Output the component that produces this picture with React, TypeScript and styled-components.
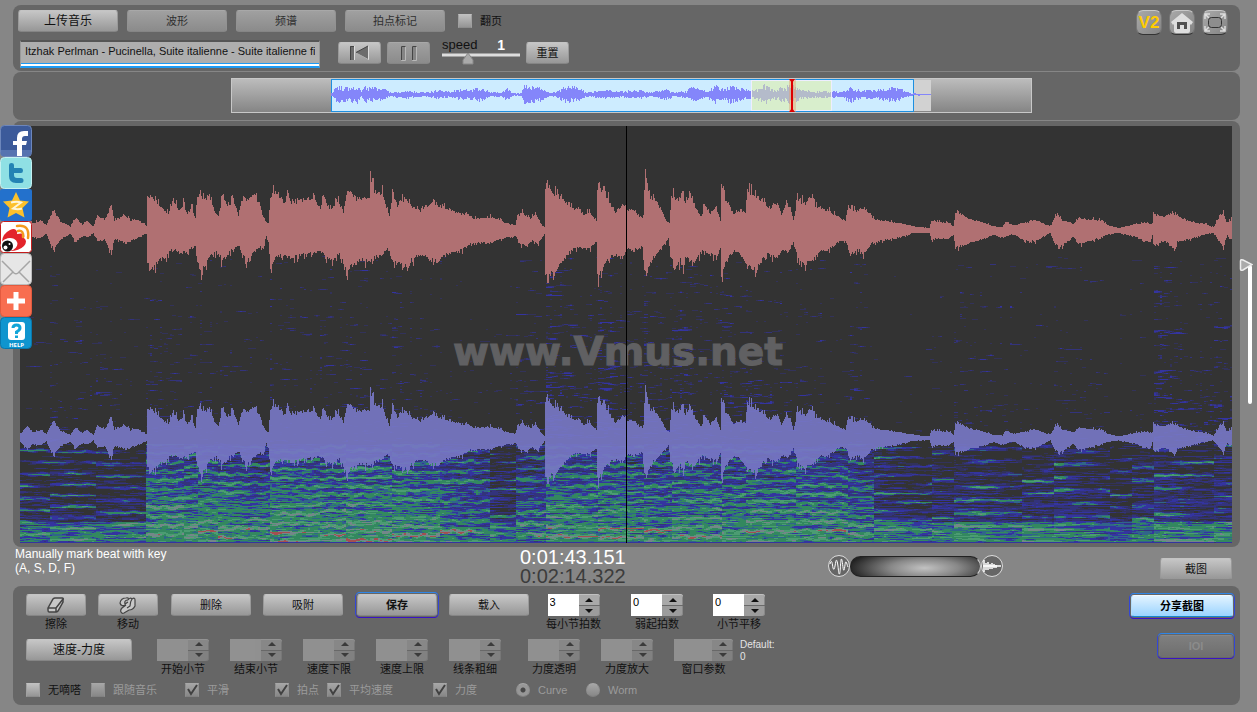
import React from "react";
import styled, { createGlobalStyle, css } from "styled-components";

const GlobalStyle = createGlobalStyle`
  * { box-sizing: border-box; }
  body {
    margin: 0;
    background: #868686;
    font-family: "Liberation Sans", "Noto Sans CJK SC", sans-serif;
    font-size: 11px;
    line-height: 14px;
    color: #111;
  }
  button, input { font-family: inherit; }
`;

/* ---------- waveform and spectrogram data ---------- */

type Pt = [number, number];

const W = 1212;
const H = 417;

const hash = (a: number, b: number) => {
  let n = (Math.imul(a, 374761393) + Math.imul(b, 668265263)) | 0;
  n = Math.imul(n ^ (n >>> 13), 1274126177);
  return ((n ^ (n >>> 16)) >>> 0) / 4294967296;
};

const smooth = (x: number, row: number, size: number) => {
  const i = Math.floor(x / size);
  const t = x / size - i;
  return hash(i, row) * (1 - t) + hash(i + 1, row) * t;
};

/* list of "x amplitude" pairs */
const parse = (s: string): Pt[] =>
  s.trim().split(/\s+/).map((p) => p.split(":").map(Number) as Pt);

const UP = parse(`0:6 7:14 12:7 20:10 26:5 33:22 40:9 50:4 55:13 62:6 67:10 73:4 77:15 85:11 91:27 94:10 100:13
105:16 110:9 116:12 124:6 126:5 127:34 129:36 136:31 143:21 148:18 153:33 158:21 163:27 167:18 172:23 175:12
177:33 180:40 184:31 189:38 193:23 198:14 202:35 207:27 213:31 218:16 223:38 227:29 231:38 235:38 239:28 243:14
246:7 248:8 250:33 253:39 258:39 263:29 267:36 273:27 283:33 295:33 300:22 302:36 310:22 317:32 323:20 326:38
330:40 337:33 343:33 349:35 350:52 352:52 354:40 362:40 367:22 369:15 372:36 377:26 380:33 385:33 392:26 400:20
410:29 420:25 430:22 440:18 448:16 455:12 463:13 472:14 480:10 487:7 495:5 497:15 502:18 510:12 515:18 520:7
524:3 525:45 527:56 528:46 533:40 535:38 540:35 547:27 552:22 558:23 563:15 568:20 576:10 577:45 578:50 580:42
584:44 586:37 590:28 595:18 602:27 608:22 613:23 618:15 623:13 624:43 625:57 627:50 630:35 637:29 642:20 645:10
649:8 651:38 657:32 663:40 665:27 670:37 675:25 681:13 684:28 690:18 696:25 700:10 701:50 703:38 708:27 713:17
720:22 725:18 727:44 733:37 742:32 748:24 758:27 761:15 765:28 770:25 773:10 777:32 785:29 792:37 795:24
800:25 810:19 817:15 825:10 828:25 835:20 843:24 848:20 853:12 867:9 880:7 890:5 900:3 909:2 911:9 928:8
933:4 935:18 940:17 948:12 960:9 973:4 982:3 985:9 993:5 1002:7 1007:8 1015:11 1022:7 1030:4 1034:13 1037:17
1042:10 1053:7 1058:13 1070:11 1080:10 1088:5 1098:2 1113:6 1127:8 1132:6 1133:17 1142:15 1153:17 1165:11
1175:8 1187:6 1193:3 1198:12 1203:18 1206:8 1209:10 1212:12`);

const DOWN = parse(`0:5 7:14 12:8 20:9 26:4 33:21 40:10 50:4 55:13 62:6 67:8 73:3 77:12 85:10 91:26 94:9 105:14
116:9 126:4 127:30 129:44 133:41 140:31 147:27 151:20 155:22 160:25 167:22 175:18 177:35 181:44 188:30 197:22
202:34 208:25 218:15 226:34 233:25 238:19 243:18 246:6 248:13 250:40 257:27 267:28 273:29 287:25 300:22 310:33
320:25 326:44 330:38 340:33 350:33 363:25 367:19 373:35 385:38 400:25 410:33 420:29 430:24 440:22 450:15 460:13
470:14 480:10 495:6 500:15 507:17 512:11 517:16 524:4 525:45 527:57 530:46 535:43 542:34 547:27 553:20 562:18
569:20 576:13 577:48 578:58 580:47 587:33 595:25 602:30 608:20 613:22 622:17 624:46 626:49 628:37 633:30
640:20 648:9 651:30 654:42 660:32 663:45 665:30 675:35 682:20 687:26 697:27 700:18 701:50 704:38 713:22
720:25 727:36 736:43 747:24 755:31 762:20 767:25 773:13 777:30 784:37 792:34 797:23 808:22 817:13 825:11
830:27 838:20 843:26 850:15 863:11 880:8 893:3 909:3 911:10 928:9 933:5 935:19 942:17 950:13 963:10 973:5
983:8 993:4 1003:11 1015:12 1030:3 1034:15 1042:17 1053:7 1058:15 1070:12 1087:5 1098:3 1117:8 1130:13
1132:5 1133:15 1145:12 1154:19 1157:13 1168:10 1183:5 1193:3 1203:18 1207:5 1209:10 1212:8`);

const OVER = parse(`331:1 333:3 336:8 345:7 350:7 358:9 361:2 364:8 375:7 385:5 390:2 400:3 405:4 420:2 432:3 437:4 450:3
460:5 470:5 480:7 490:2 500:2 507:6 513:1 521:1 524:9 530:9 540:7 547:3 550:1 557:3 563:8 572:8 580:6 585:2 604:4
620:3 640:4 650:2 665:5 675:2 686:3 690:7 700:6 705:3 716:9 724:5 730:9 740:6 750:4 760:6 764:10 772:5 784:7
790:10 800:5 815:3 835:3 840:2 850:8 860:4 880:5 895:8 905:3 910:1 930:0`);

const at = (pts: Pt[], x: number) => {
  if (x <= pts[0][0]) return pts[0][1];
  for (let i = 1; i < pts.length; i++) {
    if (x <= pts[i][0]) {
      const [x0, y0] = pts[i - 1];
      const [x1, y1] = pts[i];
      return y0 + ((y1 - y0) * (x - x0)) / (x1 - x0 || 1);
    }
  }
  return pts[pts.length - 1][1];
};

/* uneven column heights: mostly a little under the envelope, with single taller spikes */
const rough = (x: number, seed: number) => {
  const r = hash(x * 7 + 13, seed * 101);
  return r > 0.86 ? 1.04 + (r - 0.86) : 0.86 + r * 0.18;
};

const wave = (mid: number, gain: number) => {
  let d = "";
  for (let x = 0; x < W; x++) {
    const up = at(UP, x) * gain * rough(x, 3);
    const dn = at(DOWN, x) * gain * rough(x, 7);
    d += `M${x} ${Math.round(mid - up)}V${Math.round(mid + dn)}`;
  }
  return d;
};

const overview = () => {
  let d = "";
  for (let x = 331; x < 931; x++) {
    const a = at(OVER, x) * (0.4 + 0.65 * hash(x * 7, 1100));
    const b = at(OVER, x) * (0.4 + 0.65 * hash(x * 7, 1200));
    d += `M${x - 231} ${Math.round(15 - a)}V${Math.round(16 + b)}`;
  }
  return d;
};

/* note onsets: start, loudness, spacing of the partials, decay per pixel, high-band energy */
const NOTES = [
  [0, 0.3, 12, 0, 0.1], [29, 0.36, 11, 0.001, 0.3], [76, 0.36, 12, 0.001, 0.2],
  [126, 0.84, 9, 0.001, 0.35], [163, 0.8, 10, 0.001, 0.2], [177, 0.86, 10, 0.002, 0.3],
  [198, 0.82, 9, 0.003, 0.25], [249, 0.85, 9, 0.0005, 0.35], [300, 0.83, 8, 0, 0.3],
  [325, 0.86, 9, 0, 0.35], [372, 0.84, 9, 0.001, 0.35], [420, 0.72, 10, 0.003, 0.2], [470, 0.46, 9, 0.004, 0.05],
  [495, 0.62, 11, 0.001, 0.3], [525, 0.85, 10, 0.002, 0.6], [577, 0.84, 9, 0.002, 0.6],
  [624, 0.76, 11, 0.002, 0.5], [651, 0.8, 9, 0.001, 0.5], [701, 0.78, 9, 0.001, 0.45],
  [726, 0.8, 10, 0.001, 0.45], [775, 0.76, 9, 0.001, 0.28], [828, 0.7, 9, 0.003, 0.3],
  [853, 0.5, 9, 0.004, 0.02], [911, 0.42, 13, 0.001, 0.1], [934, 0.5, 13, 0.003, 0.35],
  [1002, 0.42, 12, 0.001, 0.15], [1034, 0.5, 13, 0.003, 0.3], [1090, 0.26, 12, 0, 0],
  [1112, 0.42, 13, 0, 0.15], [1133, 0.56, 13, 0.003, 0.6], [1193, 0.48, 13, 0, 0.4],
];

const TINTS = ["#32325a", "#33337c", "#3434a0", "#30658a", "#33885f", "#4b9c72", "#748789", "#a34f51"];

const spectrogram = () => {
  const out = TINTS.map(() => "");
  for (let y = 130; y < H; y++) {
    const f = (y - 318) / 99;
    let start = 0;
    let prev = -1;
    let n = 0;
    for (let x = 0; x <= W; x += 2) {
      while (n + 1 < NOTES.length && NOTES[n + 1][0] <= x) n++;
      const [x0, g0, sp, decay, high] = NOTES[n];
      const g = g0 - (x - x0) * decay;
      const loud = g0 > 0.6;
      const vib = Math.sin(x / 2.6 + n) * (loud ? 1 : 0.4);
      const phase = (y + vib + n * 5) / sp;
      const harm = Math.max(0, Math.cos(phase * 6.283));
      /* each partial swells and fades on its own */
      const swell = smooth(x, Math.round(phase) * 53 + n * 7, 26);
      let lvl = -1;
      if (x < W) {
        if (f < 0) {
          const k = (y - 130) / 188;
          const grain = smooth(x, y * 31, 5) * 0.6 + smooth(x, (y >> 1) * 17, 19) * 0.4;
          const near = Math.max(0, 1 - (x - x0) / 34);
          const e = grain + harm * 0.12 + high * (0.1 + near * 0.22) + high * k * 0.34 - 0.02;
          if (e > 0.95) lvl = e > 1.08 ? 2 : e > 1.01 ? 1 : 0;
        } else if (loud) {
          const grain = smooth(x, y * 31, 6) * 0.6 + smooth(x, y * 17, 34) * 0.4;
          let e = g * 0.55 + f * 0.4 + harm * (0.14 + swell * 0.3 - f * 0.1) + (grain - 0.5) * 0.56 - 0.29;
          if (f > 0.8 && f < 0.95) e += harm * 0.12;
          if (f > 0.985) e = Math.min(e, 0.33);
          lvl = e < 0.06 ? -1 : e < 0.13 ? 0 : e < 0.27 ? 1 : e < 0.37 ? 2 : e < 0.45 ? 3 : e < 0.62 ? 4 : e < 0.74 ? 5 : e < 0.88 ? 6 : 7;
        } else {
          const grain = smooth(x, y * 31, 8) * 0.55 + smooth(x, y * 17, 40) * 0.45;
          let e = g * 0.5 + f * 0.2 + harm * harm * swell * 0.5 + (grain - 0.5) * 0.5 - 0.22;
          if (f > 0.78) e += 0.24 - harm * 0.1;
          if (f > 0.985) e = Math.min(e, 0.33);
          lvl = e < 0.07 ? -1 : e < 0.14 ? 0 : e < 0.24 ? 1 : e < 0.34 ? 2 : e < 0.41 ? 3 : e < 0.54 ? 4 : e < 0.66 ? 5 : 6;
        }
        if (lvl === 6 && f < 0.6) lvl = 5;
        if (lvl === 7 && f < 0.84) lvl = 5;
      }
      if (lvl !== prev || x === W) {
        if (prev >= 0) out[prev] += `M${start} ${y}.5H${x}`;
        start = x;
        prev = lvl;
      }
    }
  }
  return out;
};

const RED_WAVE = wave(104, 1);
const BLUE_WAVE = wave(312, 0.87);
const OVERVIEW = overview();
const SPECTRUM = spectrogram();

/* ---------- shared parts ---------- */

const Page = styled.div`
  position: relative;
  min-height: 100vh;
  padding: 5px 17px 7px 13px;
  display: flex;
  flex-direction: column;
  gap: 1px;
`;

const Panel = styled.section`
  background: #666;
  border-radius: 8px;
`;

const Button = styled.button<{ $w: number; $tone?: "dim" | "sky" | "off"; $ring?: boolean; $size?: number }>`
  width: ${(p) => p.$w}px;
  height: 22px;
  padding: 0;
  display: flex;
  align-items: center;
  justify-content: center;
  border: 1px solid #999;
  border-color: #c4c4c4 #999 #858585;
  border-radius: 3px;
  background: linear-gradient(#c6c6c6, #979797);
  color: #111;
  font-size: ${(p) => p.$size ?? 11}px;
  line-height: 16px;
  white-space: nowrap;
  svg { flex: none; }
  ${(p) => p.$tone === "dim" && css`
    background: linear-gradient(#a0a0a0, #8b8b8b);
    border-color: #a8a8a8 #929292 #858585;
    color: #303030;
  `}
  ${(p) => p.$tone === "sky" && css`
    background: linear-gradient(#e2f3ff, #9bd4ff);
    border-color: #f2faff #b3ddfb #1687d0;
    color: #000;
  `}
  ${(p) => p.$tone === "off" && css`
    background: linear-gradient(#7f7f7f, #6f6f6f);
    border-color: #888 #777 #707070;
    color: #8b8b8b;
  `}
  ${(p) => p.$ring && css`
    font-weight: 700;
    box-shadow: 0 0 0 1px #666, 0 -1px 0 1px #2f86e6, 0 1px 0 1px #3a14c4, 0 0 0 2px #3346d8;
  `}
`;

const Row = styled.div<{ $gap: number; $left?: number }>`
  display: flex;
  align-items: flex-start;
  gap: ${(p) => p.$gap}px;
  margin-left: ${(p) => p.$left ?? 0}px;
`;

const Stack = styled.div`
  display: flex;
  flex-direction: column;
  align-items: center;
  gap: 1px;
  white-space: nowrap;
`;

const Box = styled.input`
  appearance: none;
  width: 14px;
  height: 14px;
  margin: 0;
  border: 1px solid #999;
  border-color: #c0c0c0 #a0a0a0 #8c8c8c;
  background: linear-gradient(#bfbfbf, #959595);
  &[type="radio"] { border-radius: 50%; }
  &:disabled { opacity: 0.72; }
  &[type="checkbox"]:checked {
    background: url("data:image/svg+xml,%3Csvg xmlns='http://www.w3.org/2000/svg' viewBox='0 0 12 12'%3E%3Cpath d='M2 5l3 5 6-9' fill='none' stroke='%23333' stroke-width='2'/%3E%3C/svg%3E"), linear-gradient(#bfbfbf, #959595);
  }
  &[type="radio"]:checked { background: radial-gradient(#3c3c3c 0 2px, #aaa 3px); }
`;

const CheckLabel = styled.label<{ $w?: number; $faint?: boolean }>`
  display: flex;
  align-items: center;
  gap: 8px;
  width: ${(p) => (p.$w ? `${p.$w}px` : "auto")};
  color: ${(p) => (p.$faint ? "#9b9b9b" : "#111")};
  white-space: nowrap;
`;

/* ---------- top toolbar ---------- */

const Toolbar = styled(Panel)`
  display: flex;
  justify-content: space-between;
  height: 66px;
  padding: 5px 12px 0 5px;
`;

const ToolRows = styled.div`
  display: flex;
  flex-direction: column;
  gap: 8px;
`;

const Tabs = styled.div`
  display: flex;
  align-items: center;
  gap: 9px;
  label { margin-left: 4px; }
`;

const Transport = styled.div`
  display: flex;
  align-items: flex-start;
  gap: 6px;
  margin-left: 12px;
  padding-top: 2px;
`;

const Title = styled.input`
  width: 300px;
  height: 28px;
  padding: 0 4px 6px;
  border: 1px solid #999;
  border-top: 2px solid #555;
  border-bottom: 2px solid #1e9bf5;
  background: #aeaeae;
  box-shadow: inset 0 -2px 0 #fff, inset 0 -3px 0 #1e9bf5;
  font-size: 11px;
  line-height: 14px;
  color: #111;
`;

const Speed = styled.label`
  position: relative;
  width: 78px;
  height: 26px;
  margin: -4px 0 0 6px;
  font-size: 13px;
  svg { display: block; }
`;

const SpeedText = styled.span`
  display: flex;
  justify-content: space-between;
  padding-right: 15px;
  b { color: #fff; font-size: 14px; }
`;

const GhostRange = styled.input`
  position: absolute;
  inset: 0;
  width: 100%;
  height: 100%;
  margin: 0;
  opacity: 0;
`;

const IconBar = styled.div`
  display: flex;
  gap: 7px;
`;

const IconButton = styled.button`
  width: 26px;
  height: 25px;
  padding: 0;
  display: grid;
  place-items: center;
  border: 1px solid #8e8e8e;
  border-color: #c8c8c8 #777 #333;
  border-radius: 7px;
  background: linear-gradient(135deg, #a9a9a9, #848484);
  color: #fc0;
  font: 700 17px/20px "Liberation Sans", sans-serif;
`;

/* ---------- overview strip ---------- */

const OverviewPanel = styled(Panel)`
  padding: 6px 208px 7px 218px;
`;

const Strip = styled.div`
  height: 35px;
  border: 1px solid #c8c8c8;
  background: linear-gradient(#bcbcbc, #858585);
  svg { display: block; width: 100%; height: 33px; }
`;

/* ---------- stage ---------- */

const StagePanel = styled(Panel)`
  padding: 5px 8px 4px 7px;
`;

const Stage = styled.div`
  display: grid;
  background: #333;
  > * { grid-area: 1 / 1; }
  > svg { display: block; width: 100%; height: 417px; }
`;

const Watermark = styled.span`
  place-self: center;
  padding: 34px 16px 0 0;
  font: 700 39px/44px "DejaVu Sans", sans-serif;
  color: #606062;
  -webkit-text-stroke: 1px #606062;
`;

const Cursor = styled.i`
  justify-self: center;
  width: 1px;
  background: #000;
`;

const Share = styled.nav`
  position: absolute;
  left: 0;
  top: 125px;
  display: flex;
  flex-direction: column;
  a, svg { display: block; width: 32px; height: 32px; }
`;

const Zoomer = styled.label`
  position: absolute;
  right: 4px;
  top: 258px;
  width: 14px;
  height: 148px;
  svg { display: block; }
`;

/* ---------- status strip ---------- */

const Status = styled.div`
  display: grid;
  grid-template-columns: 505px 308px 1fr auto;
  height: 37px;
  padding: 0 8px 0 2px;
  color: #fff;
`;

const Hint = styled.p`
  margin: -1px 0 0;
  font-size: 12px;
  line-height: 14px;
`;

const Clock = styled.div`
  font-size: 20px;
  line-height: 19px;
  span { display: block; color: #3c3c3c; }
`;

const Volume = styled.label`
  position: relative;
  display: flex;
  align-items: center;
  width: 175px;
  height: 22px;
  margin-top: 7px;
  svg { flex: none; }
`;

const Barrel = styled.span`
  flex: 1;
  height: 21px;
  border: 1px solid #222;
  border-right-color: #ccc;
  border-radius: 11px;
  background: radial-gradient(ellipse 76px 20px at 57% 58%, #c2c2c2, #888 45%, #222 100%);
`;

const Snap = styled.div`
  padding-top: 10px;
`;

/* ---------- controls ---------- */

const Controls = styled(Panel)`
  display: flex;
  justify-content: space-between;
  height: 119px;
  padding: 8px 7px 0 13px;
`;

const ControlRows = styled.div`
  display: flex;
  flex-direction: column;
  justify-content: space-between;
  padding-bottom: 8px;
`;

const Actions = styled.div`
  display: flex;
  flex-direction: column;
  align-items: flex-end;
  gap: 18px;
  padding-top: 1px;
`;

const Spin = styled.span<{ $w: number; $off?: boolean }>`
  display: flex;
  width: ${(p) => p.$w}px;
  height: 22px;
  opacity: ${(p) => (p.$off ? 0.5 : 1)};
  input {
    flex: 1;
    min-width: 0;
    height: 22px;
    padding: 0 2px 6px;
    border: 0;
    background: ${(p) => (p.$off ? "#bbb" : "#fff")};
    font-size: 11px;
    color: #000;
  }
`;

const Arrows = styled.span`
  display: grid;
  width: 21px;
  button {
    display: grid;
    place-items: center;
    padding: 0;
    border: 0;
    border-radius: 0 3px 0 0;
    background: #a9a9a9;
    box-shadow: inset 0 1px 0 #c0c0c0, inset -1px 0 0 #888;
  }
  button + button {
    border-radius: 0 0 3px 0;
    background: #9c9c9c;
    box-shadow: inset 0 1px 0 #6a6a6a, inset -1px 0 0 #888;
  }
`;

const Note = styled.div`
  margin-left: 7px;
  font-size: 10px;
  line-height: 12px;
  color: #e4e4e4;
`;

const SpinField = ({ label, value = "", w = 52, off }: { label: string; value?: string; w?: number; off?: boolean }) => (
  <Stack as="label">
    <Spin $w={w} $off={off}>
      <input defaultValue={value} disabled={off} />
      <Arrows>
        <button type="button" disabled={off} aria-label={`${label} +`}>
          <svg width="8" height="4"><path d="M0 4L4 0L8 4Z" fill="#111" /></svg>
        </button>
        <button type="button" disabled={off} aria-label={`${label} -`}>
          <svg width="8" height="4"><path d="M0 0L4 4L8 0Z" fill="#111" /></svg>
        </button>
      </Arrows>
    </Spin>
    {label}
  </Stack>
);

const Check = ({ label, w, on, faint, radio }: { label: string; w?: number; on?: boolean; faint?: boolean; radio?: boolean }) => (
  <CheckLabel $w={w} $faint={faint}>
    <Box type={radio ? "radio" : "checkbox"} name={radio ? "view" : undefined} defaultChecked={on} disabled={faint} />
    {label}
  </CheckLabel>
);

const ShareLinks = () => (
  <Share aria-label="分享">
    <a href="#facebook" aria-label="Facebook">
      <svg viewBox="0 0 32 32">
        <rect x=".5" y=".5" width="31" height="31" rx="4" fill="#3c5a9a" stroke="#6d86bb" />
        <path d="M1 25h30v3q0 3-3 3H4q-3 0-3-3z" fill="#5673b0" />
        <path d="M17 31V20h-4v-4h4v-3q0-7 7-7h4v5h-3q-3 0-3 3v2h5l-1 4h-4v11z" fill="#fff" />
      </svg>
    </a>
    <a href="#twitter" aria-label="Twitter">
      <svg viewBox="0 0 32 32">
        <rect x=".5" y=".5" width="31" height="31" rx="4" fill="#8fe0e4" stroke="#c4f1f1" />
        <path d="M9 8q0-2 2.500-2t2.500 2v3h7q2 0 2 2.500T21 16h-7v2q0 3 3 3h4q2.500 0 2.500 2.500T21 26h-5q-7 0-7-7z" fill="#2383b4" />
      </svg>
    </a>
    <a href="#qzone" aria-label="QZone">
      <svg viewBox="0 0 32 32">
        <rect width="32" height="32" rx="2" fill="#2371cc" />
        <path d="M16 3l4 8.500 9 1-6.500 6.500 2 9.500L16 24l-8.500 4.500 2-9.500L3 12.500l9-1z" fill="#fcc12c" />
        <path d="M11 13.500q6-1.500 10 0L13 19.500q5 1.500 9 0" fill="none" stroke="#fff6d8" strokeWidth="2" />
      </svg>
    </a>
    <a href="#weibo" aria-label="Weibo">
      <svg viewBox="0 0 32 32">
        <rect x=".5" y=".5" width="31" height="31" rx="3" fill="#fff" stroke="#c31c1c" />
        <path d="M2 21Q2 13 10 9q4-2 6 0 2 2 1 4 9-2 7 4 4 3 0 8-5 5-14 5Q1 30 2 21z" fill="#e3242b" />
        <ellipse cx="9" cy="23.500" rx="8.500" ry="6.500" fill="#fff" transform="rotate(-12 9 23.500)" />
        <circle cx="7.500" cy="25" r="5.500" fill="#111" />
        <circle cx="5.500" cy="26.500" r="2" fill="#fff" />
        <circle cx="9.500" cy="23" r="1" fill="#fff" />
        <path d="M18 10q6-1 5 6M17 5q13-2 11 12" fill="none" stroke="#f39a1e" strokeWidth="2.500" strokeLinecap="round" />
      </svg>
    </a>
    <a href="#mail" aria-label="Email">
      <svg viewBox="0 0 32 32">
        <rect x=".5" y=".5" width="31" height="31" rx="4" fill="#e6e6e6" stroke="#bdbdbd" />
        <path d="M2 8l12 12q2 1.500 4 0L30 8M3 29l10-10M29 29L19 19" fill="none" stroke="#a5a5a5" strokeWidth="1.500" />
      </svg>
    </a>
    <a href="#more" aria-label="More">
      <svg viewBox="0 0 32 32">
        <rect x=".5" y=".5" width="31" height="31" rx="4" fill="#f86e50" stroke="#e35a3e" />
        <path d="M16 7v18M7 16h18" stroke="#fff" strokeWidth="5" />
      </svg>
    </a>
    <a href="#help" aria-label="Help">
      <svg viewBox="0 0 32 32">
        <rect x=".5" y=".5" width="31" height="31" rx="4" fill="#0f95cf" stroke="#0878ad" />
        <rect x="8" y="5" width="17" height="18" rx="3" fill="#fff" />
        <path d="M13 11q0-3 3.500-3t3.500 3q0 2-3.500 4v2M16.500 18.500v2.500" fill="none" stroke="#13a5d8" strokeWidth="3" />
        <text x="16.500" y="29.500" textAnchor="middle" fontSize="6" fontWeight="700" fill="#fff" fontFamily="Open Sans, sans-serif">HELP</text>
      </svg>
    </a>
  </Share>
);

export default function App() {
  return (
    <Page>
      <GlobalStyle />
      <Toolbar>
        <ToolRows>
          <Tabs>
            <Button $w={100} $size={12}>上传音乐</Button>
            <Button $w={100} $tone="dim">波形</Button>
            <Button $w={100} $tone="dim">频谱</Button>
            <Button $w={100} $tone="dim">拍点标记</Button>
            <Check label="翻页" />
          </Tabs>
          <Row $gap={6} $left={2}>
            <Title aria-label="曲目" defaultValue="Itzhak Perlman - Pucinella, Suite italienne - Suite italienne finale" />
            <Transport>
              <Button $w={43} aria-label="上一首">
                <svg width="21" height="16">
                  <path d="M2 1h4v14H2zM20 1v14L8 8z" fill="#ddd" />
                  <path d="M1 1h4v14H1zM19 1v13L7 7.500z" fill="#6c6c6c" />
                  <path d="M1.500 15V1.500H5M19 1L7 7.500" fill="none" stroke="#444" />
                </svg>
              </Button>
              <Button $w={43} $tone="dim" aria-label="暂停">
                <svg width="18" height="16">
                  <path d="M1.500 1.500h4v14h-4zM12.500 1.500h4v14h-4z" fill="#848484" stroke="#b8b8b8" />
                  <path d="M1.500 15V1.500h4M12.500 15V1.500h4" fill="none" stroke="#444" />
                </svg>
              </Button>
              <Speed>
                <SpeedText>speed <b>1</b></SpeedText>
                <svg width="78" height="14">
                  <path d="M0 3H78" stroke="#ddd" strokeWidth="3" />
                  <path d="M21 12V8L26 1L31 8v4z" fill="#aaa" stroke="#888" />
                </svg>
                <GhostRange type="range" min={0} max={3} step={1} defaultValue={1} aria-label="speed" />
              </Speed>
              <Button $w={43}>重置</Button>
            </Transport>
          </Row>
        </ToolRows>
        <IconBar>
          <IconButton>V2</IconButton>
          <IconButton aria-label="主页">
            <svg width="22" height="20">
              <path d="M11 0L0 9l2 3 1-1v7q0 2 2 2h12q2 0 2-2v-7l1 1 2-3z" fill="#dedede" />
              <path d="M6 16V9h10v7h-3v-4H9v4z" fill="#505050" />
            </svg>
          </IconButton>
          <IconButton aria-label="全屏">
            <svg width="22" height="19" fill="none">
              <path d="M1 6V1h5M1 1l4 4M16 1h5v5M21 1l-4 4M1 13v5h5M1 18l4-4M21 13v5h-5M21 18l-4-4" stroke="#ddd" strokeWidth="1.500" />
              <rect x="4.500" y="4.500" width="13" height="10" rx="3" fill="#8d8d8d" stroke="#333" />
            </svg>
          </IconButton>
        </IconBar>
      </Toolbar>

      <OverviewPanel>
        <Strip>
          <svg viewBox="0 0 799 33" preserveAspectRatio="none">
            <rect x="99.500" y=".5" width="582" height="32" fill="#cdecff" stroke="#1d8fe0" />
            <rect x="682" y="1" width="17" height="31" fill="#d2d2d2" />
            <path d={OVERVIEW} stroke="#8486fa" transform="translate(-.5 0)" />
            <rect x="519.500" y="1.500" width="80" height="30" fill="#e4f09a" fillOpacity=".5" stroke="#eef" />
            <rect x="557" y="0" width="7" height="33" fill="#e7a070" opacity=".45" />
            <path d="M560 0V33" stroke="#d00" strokeWidth="2" />
            <path d="M557 0h6l-3 4zM557 33h6l-3-4z" fill="#d00" />
          </svg>
        </Strip>
      </OverviewPanel>

      <StagePanel>
        <Stage>
          <svg viewBox={`0 0 ${W} ${H}`} preserveAspectRatio="none">
            {SPECTRUM.map((d, i) => (
              <path key={TINTS[i]} d={d} stroke={TINTS[i]} />
            ))}
            <path d={RED_WAVE} stroke="#b07072" transform="translate(.5 0)" />
            <path d={BLUE_WAVE} stroke="#7777c4" opacity=".92" transform="translate(.5 0)" />
          </svg>
          <Watermark>www.Vmus.net</Watermark>
          <Cursor />
        </Stage>
      </StagePanel>

      <Status>
        <Hint>
          Manually mark beat with key
          <br />
          (A, S, D, F)
        </Hint>
        <Clock>
          0:01:43.151
          <span>0:02:14.322</span>
        </Clock>
        <Volume>
          <svg width="22" height="22" fill="none">
            <circle cx="11" cy="11" r="10.500" fill="#666" stroke="#ddd" />
            <path d="M2 9C3 5 4 6 4.500 10S6 17 7 11 8.500 3 9.500 8 10.500 20 11.500 19 12.500 3 13.500 4 15 17 16 15 17 6 18 7 19 10 20 12" stroke="#fff" />
          </svg>
          <Barrel />
          <svg width="22" height="22">
            <circle cx="11" cy="11" r="10.500" fill="#666" stroke="#ddd" />
            <path d="M3 5v12M5 8v7M7 7v8M9 9v5M11 8v6M13 9v4M15 10v3M2 11h18" stroke="#fff" strokeWidth="1.500" />
          </svg>
          <GhostRange type="range" aria-label="音量" />
        </Volume>
        <Snap>
          <Button $w={72}>截图</Button>
        </Snap>
      </Status>

      <Controls>
        <ControlRows>
          <Row $gap={12}>
            <Stack>
              <Button $w={60} aria-label="擦除">
                <svg width="18" height="16" fill="#c8c8c8" stroke="#444" strokeWidth="1.500">
                  <path d="M1 11L6 2Q7 1 8 1h7q2 0 1 2v2l-5 9q-1 1-2 1H2q-1 0-1-2zM1 11h8v4M9 11l7-9" />
                </svg>
              </Button>
              擦除
            </Stack>
            <Stack>
              <Button $w={60} aria-label="移动">
                <svg width="18" height="17" fill="#c8c8c8" stroke="#444" strokeWidth="1.200">
                  <path d="M2 15q-1-2 1-4l4-3Q2 10 1 6 2 1 7 1q3-1 2 2 2-3 4-1 3-2 3 1v6q-2 4-6 4l-5 3q-2 1-3-1zM9 3Q5 3 6 7l3-2M13 2Q11 5 11 9L8 11" />
                </svg>
              </Button>
              移动
            </Stack>
            <Row $gap={12} $left={1}>
              <Button $w={80}>删除</Button>
              <Button $w={80}>吸附</Button>
            </Row>
            <Row $gap={12} $left={2}>
              <Button $w={80} $ring>保存</Button>
              <Button $w={80}>载入</Button>
            </Row>
            <Row $gap={30} $left={5}>
              <SpinField label="每小节拍数" value="3" />
              <SpinField label="弱起拍数" value="0" />
              <SpinField label="小节平移" value="0" />
            </Row>
          </Row>
          <Row $gap={25}>
            <Button $w={106} $size={12}>速度-力度</Button>
            <Row $gap={21}>
              <SpinField label="开始小节" off />
              <SpinField label="结束小节" off />
              <SpinField label="速度下限" off />
              <SpinField label="速度上限" off />
              <SpinField label="线条粗细" off />
            </Row>
            <Row $gap={21} $left={2}>
              <SpinField label="力度透明" off />
              <SpinField label="力度放大" off />
              <Row $gap={0}>
                <SpinField label="窗口参数" w={59} off />
                <Note>
                  Default:
                  <br />0
                </Note>
              </Row>
            </Row>
          </Row>
          <Row $gap={0}>
            <Check label="无嘀嗒" w={65} />
            <Check label="跟随音乐" w={94} faint />
            <Check label="平滑" w={90} on faint />
            <Check label="拍点" w={52} on faint />
            <Check label="平均速度" w={106} on faint />
            <Check label="力度" w={83} on faint />
            <Check label="Curve" w={70} on faint radio />
            <Check label="Worm" faint radio />
          </Row>
        </ControlRows>
        <Actions>
          <Button $w={102} $tone="sky" $ring>分享截图</Button>
          <Button $w={74} $tone="off" $ring disabled>IOI</Button>
        </Actions>
      </Controls>

      <ShareLinks />
      <Zoomer>
        <svg width="14" height="148">
          <path d="M11 9V144" stroke="#fff" strokeWidth="4" strokeLinecap="round" />
          <path d="M1.500 3Q1.500 1 4 2L13 6.500L4 12Q1.500 13 1.500 11z" fill="#ababab" stroke="#eee" strokeWidth="1.500" />
        </svg>
        <GhostRange type="range" aria-label="缩放" />
      </Zoomer>
    </Page>
  );
}
